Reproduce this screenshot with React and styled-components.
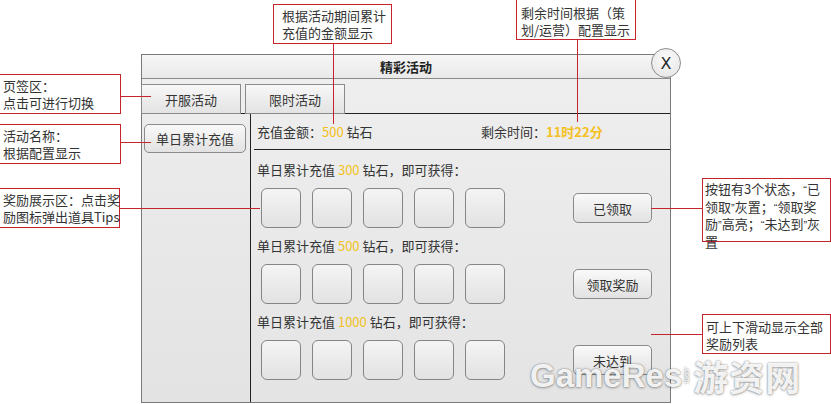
import React from "react";
import styled, { createGlobalStyle } from "styled-components";

const Global = createGlobalStyle`
  html, body {
    margin: 0;
    padding: 0;
    background: #ffffff;
    overflow: hidden;
  }
  body {
    font-family: "Noto Sans CJK SC", "Liberation Sans", sans-serif;
    font-size: 13px;
    color: #333;
  }
`;

const Page = styled.div`
  position: relative;
  width: 831px;
  height: 404px;
  padding: 54px 0 0 141px;
  box-sizing: border-box;
`;

const Panel = styled.div`
  position: relative;
  width: 530px;
  height: 349px;
  box-sizing: border-box;
  border: 1px solid #7a7a7a;
  background: linear-gradient(#efefef, #e4e4e4);
  display: flex;
  flex-direction: column;
`;

const TitleBar = styled.div`
  height: 24px;
  box-sizing: border-box;
  border-bottom: 1px solid #8a8a8a;
  background: linear-gradient(#f6f6f6, #e9e9e9);
  display: flex;
  align-items: center;
  justify-content: center;
  font-weight: 700;
  font-size: 13px;
  color: #222;
`;

const CloseBtn = styled.div`
  position: absolute;
  left: 509px;
  top: -7px;
  width: 30px;
  height: 30px;
  box-sizing: border-box;
  border-radius: 50%;
  border: 1px solid #8c8c8c;
  background: radial-gradient(circle at 50% 35%, #fbfbfb, #e2e2e2);
  display: flex;
  align-items: center;
  justify-content: center;
  font-family: "DejaVu Sans", sans-serif;
  font-size: 16px;
  color: #2a2a2a;
`;

const TabRow = styled.div`
  height: 35px;
  box-sizing: border-box;
  padding-top: 5px;
  border-bottom: 1px solid #222;
  display: flex;
  gap: 4px;
  margin-left: -1px;
`;

const Tab = styled.div`
  width: 100px;
  height: 30px;
  box-sizing: border-box;
  border: 1px solid #8a8a8a;
  background: linear-gradient(#f7f7f7, #e3e3e3);
  display: flex;
  align-items: center;
  justify-content: center;
  color: #333;
`;

const Body = styled.div`
  flex: 1;
  display: flex;
  min-height: 0;
`;

const Sidebar = styled.div`
  width: 109px;
  box-sizing: border-box;
  border-right: 1px solid #222;
  padding: 10px 3px 0 2px;
  background: linear-gradient(#ececec, #e3e3e3);
`;

const GrayButton = styled.div`
  width: ${(p) => p.$w || 79}px;
  height: ${(p) => p.$h || 30}px;
  box-sizing: border-box;
  border: 1px solid #8a8a8a;
  border-radius: 5px;
  background: linear-gradient(#f9f9f9, #e2e2e2);
  display: flex;
  align-items: center;
  justify-content: center;
  color: #333;
  flex-shrink: 0;
`;

const Content = styled.div`
  flex: 1;
  display: flex;
  flex-direction: column;
`;

const Header = styled.div`
  height: 36px;
  box-sizing: border-box;
  margin-left: 3px;
  padding-left: 3px;
  border-bottom: 1px solid #222;
  display: grid;
  grid-template-columns: 224px 1fr;
  align-items: center;
`;

const Gold = styled.span`
  color: #f4c021;
  font-weight: ${(p) => (p.$bold ? 700 : 400)};
`;

const Rows = styled.div`
  padding: 10px 18px 0 6px;
  display: flex;
  flex-direction: column;
`;

const Row = styled.div`
  height: 76px;
  display: flex;
  flex-direction: column;
`;

const RowTitle = styled.div`
  height: 20px;
  line-height: 20px;
  white-space: nowrap;
`;

const RowBody = styled.div`
  margin-top: 8px;
  display: flex;
  align-items: center;
  justify-content: space-between;
  padding-left: 4px;
`;

const Icons = styled.div`
  display: flex;
  gap: 11px;
`;

const Slot = styled.div`
  width: 40px;
  height: 40px;
  box-sizing: border-box;
  border: 1px solid #858585;
  border-radius: 6px;
  background: linear-gradient(#f4f4f4, #e2e2e2);
`;

const Callout = styled.div`
  position: absolute;
  left: ${(p) => p.$x}px;
  top: ${(p) => p.$y}px;
  width: ${(p) => p.$w}px;
  height: ${(p) => p.$h}px;
  box-sizing: border-box;
  border: 1px solid #c4252c;
  background: #fff;
  padding: ${(p) => p.$pt || 2}px 2px 0 ${(p) => p.$pl || 3}px;
  line-height: ${(p) => p.$lh || 17}px;
  white-space: nowrap;
  color: #333;
`;

const Q = styled.span`
  font-family: "Liberation Sans", sans-serif;
  font-size: 11px;
`;

const Leader = styled.div`
  position: absolute;
  left: ${(p) => p.$x}px;
  top: ${(p) => p.$y}px;
  width: ${(p) => p.$w || 1}px;
  height: ${(p) => p.$h || 1}px;
  background: #c4252c;
`;

const Watermark = styled.div`
  position: absolute;
  left: 530px;
  top: 350px;
  display: flex;
  align-items: center;
  color: rgba(255, 255, 255, 0.92);
  text-shadow: 0 0 2px rgba(0, 0, 0, 0.45), 0 1px 3px rgba(0, 0, 0, 0.25);
  font-weight: 700;
  pointer-events: none;
  white-space: nowrap;
`;

const WmLatin = styled.span`
  font-family: "Liberation Sans", sans-serif;
  font-size: 33px;
`;

const WmDot = styled.span`
  writing-mode: vertical-rl;
  font-family: "Liberation Sans", sans-serif;
  font-size: 7px;
  margin: 0 2px;
`;

const WmCjk = styled.span`
  font-family: "Noto Sans CJK SC", sans-serif;
  font-size: 35px;
  letter-spacing: 1px;
`;

const rewards = [
  { amount: 300, label: "已领取" },
  { amount: 500, label: "领取奖励" },
  { amount: 1000, label: "未达到" },
];

export default function App() {
  return (
    <>
      <Global />
      <Page>
        <Panel>
          <TitleBar>精彩活动</TitleBar>
          <CloseBtn>X</CloseBtn>
          <TabRow>
            <Tab>开服活动</Tab>
            <Tab>限时活动</Tab>
          </TabRow>
          <Body>
            <Sidebar>
              <GrayButton $w={102} $h={29}>单日累计充值</GrayButton>
            </Sidebar>
            <Content>
              <Header>
                <span>
                  充值金额：<Gold>500</Gold> 钻石
                </span>
                <span>
                  剩余时间：<Gold $bold>11时22分</Gold>
                </span>
              </Header>
              <Rows>
                {rewards.map((r) => (
                  <Row key={r.amount}>
                    <RowTitle>
                      单日累计充值 <Gold>{r.amount}</Gold> 钻石，即可获得：
                    </RowTitle>
                    <RowBody>
                      <Icons>
                        {[0, 1, 2, 3, 4].map((i) => (
                          <Slot key={i} />
                        ))}
                      </Icons>
                      <GrayButton>{r.label}</GrayButton>
                    </RowBody>
                  </Row>
                ))}
              </Rows>
            </Content>
          </Body>
        </Panel>

        <Leader $x={333} $y={43} $h={81} />
        <Leader $x={577} $y={40} $h={82} />
        <Leader $x={120} $y={96} $w={31} />
        <Leader $x={120} $y={142} $w={31} />
        <Leader $x={119} $y={208} $w={141} />
        <Leader $x={651} $y={208} $w={51} />
        <Leader $x={651} $y={334} $w={51} />

        <Callout $x={273} $y={4} $w={119} $h={40} $pl={8}>
          根据活动期间累计
          <br />
          充值的金额显示
        </Callout>
        <Callout $x={516} $y={-1} $w={120} $h={41} $pl={4} $pt={4}>
          剩余时间根据（策
          <br />
          划/运营）配置显示
        </Callout>
        <Callout $x={-1} $y={74} $w={122} $h={40}>
          页签区：
          <br />
          点击可进行切换
        </Callout>
        <Callout $x={-1} $y={124} $w={122} $h={40}>
          活动名称：
          <br />
          根据配置显示
        </Callout>
        <Callout $x={-1} $y={188} $w={121} $h={40}>
          奖励展示区：点击奖
          <br />
          励图标弹出道具Tips
        </Callout>
        <Callout $x={702} $y={178} $w={129} $h={64} $lh={15.5} $pt={0} $pl={2}>
          按钮有3个状态，<Q>“</Q>已
          <br />
          领取<Q>”</Q>灰置；<Q>“</Q>领取奖
          <br />
          励<Q>”</Q>高亮；<Q>“</Q>未达到<Q>”</Q>灰
          <br />置
        </Callout>
        <Callout $x={702} $y={314} $w={129} $h={40} $pt={3}>
          可上下滑动显示全部
          <br />
          奖励列表
        </Callout>

        <Watermark>
          <WmLatin>GameRes</WmLatin>
          <WmDot>.com</WmDot>
          <WmCjk>游资网</WmCjk>
        </Watermark>
      </Page>
    </>
  );
}
